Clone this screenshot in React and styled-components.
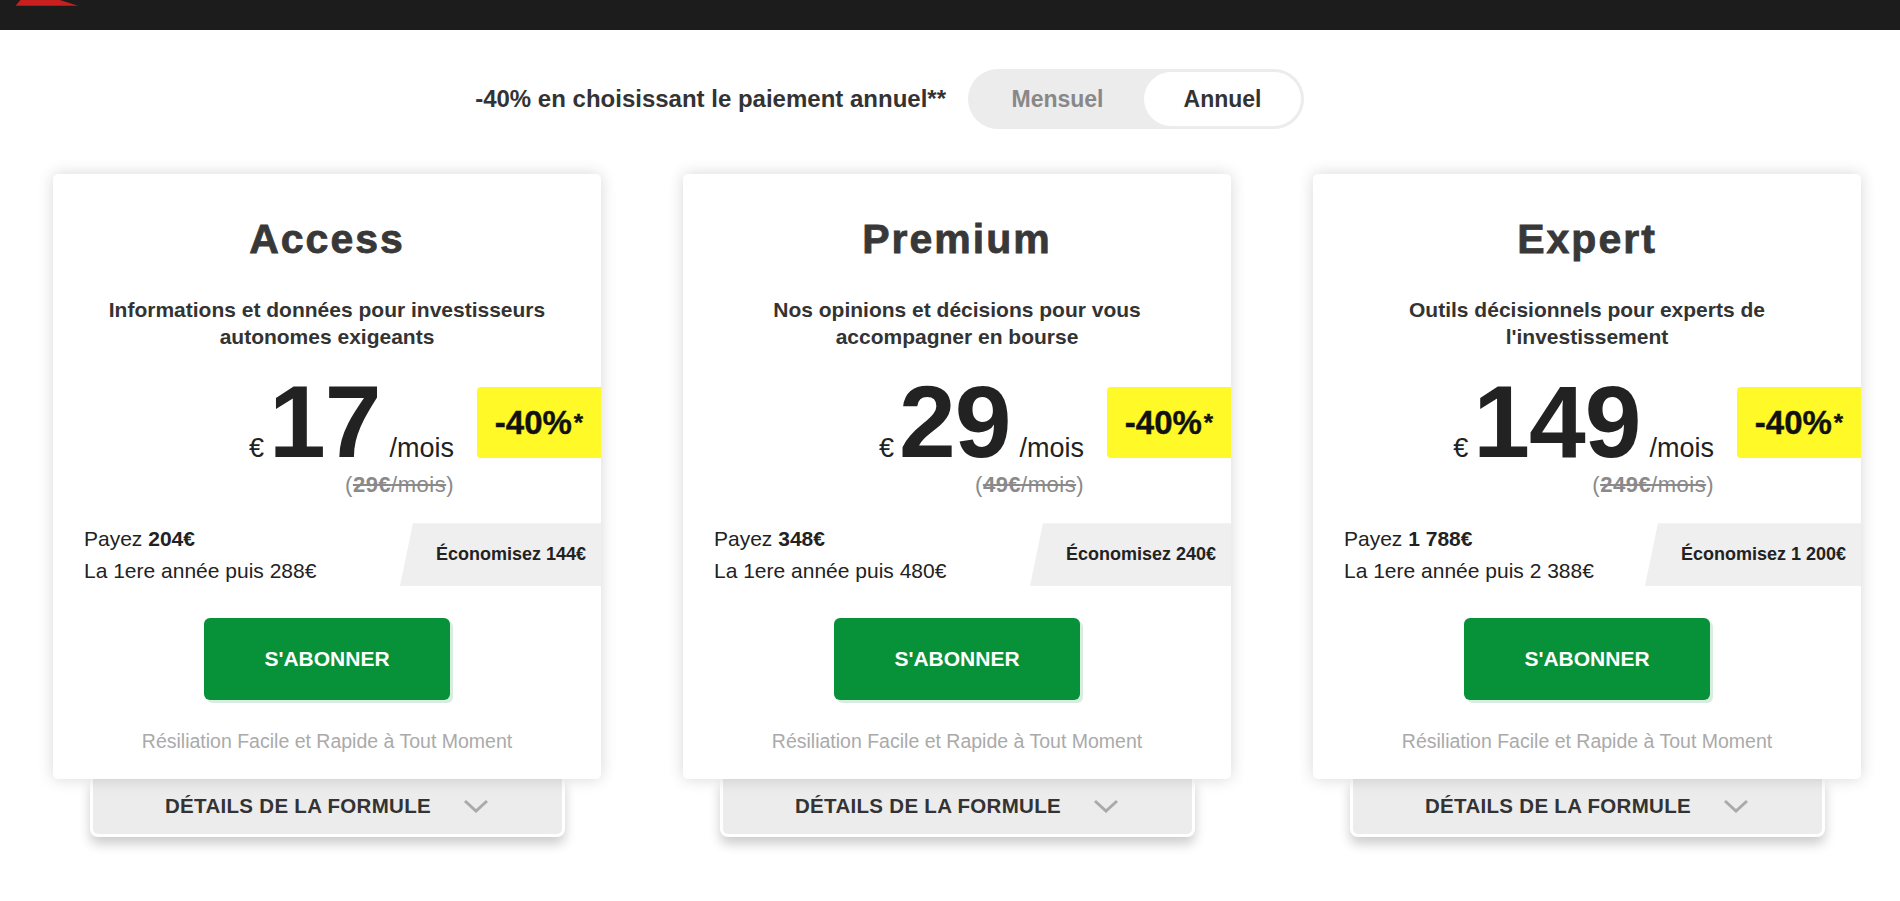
import React from 'react';
import styled, { createGlobalStyle } from 'styled-components';

const GlobalStyle = createGlobalStyle`
  html, body { margin: 0; padding: 0; background: #fff; }
  body { font-family: "Liberation Sans", Arial, sans-serif; color: #333; }
  * { box-sizing: border-box; }
`;

const Page = styled.div`
  width: 1900px;
  min-height: 901px;
  background: #fff;
`;

const Header = styled.header`
  height: 30px;
  background: #1c1c1c;
  display: flex;
  align-items: flex-start;
  padding-left: 15px;
`;

const PromoRow = styled.div`
  display: grid;
  grid-template-columns: 1fr 1fr;
  align-items: center;
  margin-top: 39px;
`;

const PromoText = styled.p`
  margin: 0;
  justify-self: end;
  padding-right: 4px;
  font-size: 24px;
  font-weight: 700;
  color: #333;
`;

const Toggle = styled.div`
  justify-self: start;
  margin-left: 18px;
  display: flex;
  height: 60px;
  padding: 3px;
  background: #ececec;
  border-radius: 30px;
`;

const ToggleOption = styled.button`
  width: ${(p) => p.$w}px;
  border: none;
  border-radius: 27px;
  background: ${(p) => (p.$active ? '#fff' : 'transparent')};
  color: ${(p) => (p.$active ? '#333' : '#888')};
  font-family: inherit;
  font-size: 23px;
  font-weight: 700;
  cursor: pointer;
`;

const Plans = styled.div`
  display: flex;
  align-items: flex-start;
  gap: 82px;
  padding-left: 53px;
  margin-top: 45px;
`;

const PlanColumn = styled.div`
  width: 548px;
  display: flex;
  flex-direction: column;
  align-items: center;
`;

const Card = styled.section`
  position: relative;
  z-index: 2;
  width: 100%;
  background: #fff;
  border-radius: 5px;
  box-shadow: 0 0 16px rgba(0, 0, 0, 0.16);
  padding: 41px 0 27px;
  display: flex;
  flex-direction: column;
  align-items: center;
`;

const Title = styled.h2`
  margin: 0;
  font-size: 41px;
  line-height: 48px;
  font-weight: 700;
  letter-spacing: 2px;
  color: #383838;
  -webkit-text-stroke: 0.8px #383838;
`;

const Description = styled.p`
  margin: 33px 40px 0;
  font-size: 21px;
  line-height: 27px;
  font-weight: 700;
  text-align: center;
  color: #333;
`;

const PriceRow = styled.div`
  align-self: stretch;
  display: flex;
  justify-content: flex-end;
  align-items: flex-start;
  gap: 23px;
  margin-top: 29px;
`;

const PriceBlock = styled.div`
  display: flex;
  flex-direction: column;
  align-items: flex-end;
`;

const PriceMain = styled.div`
  display: flex;
  align-items: baseline;
  color: #222;
  line-height: 0.85;
`;

const Currency = styled.span`
  font-size: 27px;
  margin-right: 5px;
`;

const Amount = styled.span`
  font-size: 102px;
  font-weight: 700;
  letter-spacing: -1px;
`;

const Period = styled.span`
  font-size: 27px;
  margin-left: 9px;
`;

const OldPrice = styled.div`
  font-size: 22px;
  line-height: 26px;
  color: #8a8a8a;
  margin-top: 6px;
  letter-spacing: 0.5px;
`;

const Struck = styled.span`
  text-decoration: line-through;
`;

const Badge = styled.div`
  width: 124px;
  height: 71px;
  margin-top: 8px;
  background: #fff927;
  border-radius: 4px 0 0 4px;
  display: flex;
  align-items: center;
  justify-content: center;
  font-size: 33px;
  font-weight: 700;
  color: #111;
  -webkit-text-stroke: 0.4px #111;
`;

const Star = styled.sup`
  font-size: 24px;
  line-height: 0;
  margin-left: 2px;
`;

const SavingsRow = styled.div`
  align-self: stretch;
  display: flex;
  justify-content: space-between;
  align-items: center;
  margin-top: 25px;
`;

const SavingsInfo = styled.div`
  padding-left: 31px;
  font-size: 21px;
  line-height: 32px;
  color: #222;
`;

const SavingsTag = styled.div`
  height: 63px;
  padding: 0 15px 0 36px;
  background: #efefef;
  clip-path: polygon(13px 0, 100% 0, 100% 100%, 0 100%);
  display: flex;
  align-items: center;
  font-size: 18px;
  font-weight: 700;
  color: #222;
`;

const SubscribeButton = styled.button`
  margin-top: 31px;
  width: 246px;
  height: 82px;
  border: none;
  border-radius: 6px;
  background: #079239;
  color: #fff;
  font-family: inherit;
  font-size: 21px;
  font-weight: 700;
  box-shadow: 3px 3px 0 rgba(7, 146, 57, 0.16);
  cursor: pointer;
`;

const CancelNote = styled.p`
  margin: 30px 0 0;
  font-size: 19.5px;
  line-height: 22px;
  color: #aaa;
`;

const DetailsBar = styled.button`
  position: relative;
  z-index: 1;
  width: 475px;
  height: 58px;
  background: #ececec;
  border: 3px solid #fff;
  border-top: none;
  border-radius: 0 0 8px 8px;
  box-shadow: 0 7px 12px rgba(0, 0, 0, 0.2);
  display: flex;
  align-items: center;
  justify-content: center;
  gap: 32px;
  font-family: inherit;
  font-size: 20.5px;
  font-weight: 700;
  letter-spacing: 0.3px;
  color: #333;
  cursor: pointer;
`;

const Logo = () => (
  <svg width="64" height="6" viewBox="0 0 64 6">
    <polygon points="5.5,0 45,0 63,5.7 0.5,5.7" fill="#c8201e" />
  </svg>
);

const Chevron = () => (
  <svg width="26" height="14" viewBox="0 0 26 14">
    <polyline points="2,2 13,12 24,2" fill="none" stroke="#aaa" strokeWidth="3" />
  </svg>
);

const plans = [
  {
    name: 'Access',
    desc: 'Informations et données pour investisseurs autonomes exigeants',
    price: '17',
    old: '29€',
    pay: '204€',
    then: '288€',
    save: '144€',
  },
  {
    name: 'Premium',
    desc: 'Nos opinions et décisions pour vous accompagner en bourse',
    price: '29',
    old: '49€',
    pay: '348€',
    then: '480€',
    save: '240€',
  },
  {
    name: 'Expert',
    desc: "Outils décisionnels pour experts de l'investissement",
    price: '149',
    old: '249€',
    pay: '1 788€',
    then: '2 388€',
    save: '1 200€',
  },
];

export default function App() {
  return (
    <Page>
      <GlobalStyle />
      <Header>
        <Logo />
      </Header>
      <PromoRow>
        <PromoText>-40% en choisissant le paiement annuel**</PromoText>
        <Toggle>
          <ToggleOption $w={173}>Mensuel</ToggleOption>
          <ToggleOption $w={157} $active>Annuel</ToggleOption>
        </Toggle>
      </PromoRow>
      <Plans>
        {plans.map((p) => (
          <PlanColumn key={p.name}>
            <Card>
              <Title>{p.name}</Title>
              <Description>{p.desc}</Description>
              <PriceRow>
                <PriceBlock>
                  <PriceMain>
                    <Currency>€</Currency>
                    <Amount>{p.price}</Amount>
                    <Period>/mois</Period>
                  </PriceMain>
                  <OldPrice>
                    (<Struck><b>{p.old}</b>/mois</Struck>)
                  </OldPrice>
                </PriceBlock>
                <Badge>
                  -40%<Star>*</Star>
                </Badge>
              </PriceRow>
              <SavingsRow>
                <SavingsInfo>
                  Payez <b>{p.pay}</b>
                  <br />
                  La 1ere année puis {p.then}
                </SavingsInfo>
                <SavingsTag>Économisez {p.save}</SavingsTag>
              </SavingsRow>
              <SubscribeButton>S'ABONNER</SubscribeButton>
              <CancelNote>Résiliation Facile et Rapide à Tout Moment</CancelNote>
            </Card>
            <DetailsBar>
              DÉTAILS DE LA FORMULE
              <Chevron />
            </DetailsBar>
          </PlanColumn>
        ))}
      </Plans>
    </Page>
  );
}
